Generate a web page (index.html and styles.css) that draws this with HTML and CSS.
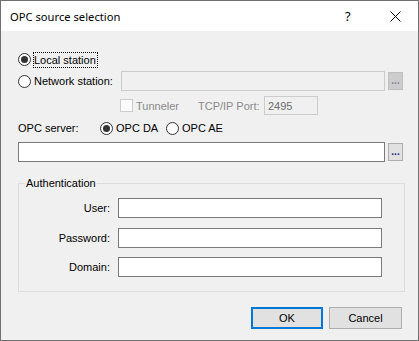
FILE: index.html
```html
<!DOCTYPE html>
<html>
<head>
<meta charset="utf-8">
<link rel="stylesheet" href="styles.css">
</head>
<body>
<div class="window">
  <div class="titlebar">
    <span class="title">OPC source selection</span>
    <span class="help">?</span>
    <span class="close"><svg width="11" height="11" viewBox="0 0 11 11"><path d="M0.5 0.5 L10.5 10.5 M10.5 0.5 L0.5 10.5" stroke="#000" stroke-width="1" fill="none"/></svg></span>
  </div>
  <div class="content">
    <div class="row row-local">
      <span class="radio checked"></span>
      <span class="focus">Local station</span>
    </div>
    <div class="row row-network">
      <span class="radio"></span>
      <span class="net-label">Network station:</span>
      <span class="input disabled net-input"></span>
      <span class="browse disabled">...</span>
    </div>
    <div class="row row-tunnel">
      <span class="check"></span>
      <span class="dim tunnel-label">Tunneler</span>
      <span class="dim port-label">TCP/IP Port:</span>
      <span class="input disabled port-input">2495</span>
    </div>
    <div class="row row-server">
      <span class="server-label">OPC server:</span>
      <span class="radio checked"></span>
      <span class="opt-label opt-da">OPC DA</span>
      <span class="radio"></span>
      <span class="opt-label">OPC AE</span>
    </div>
    <div class="row row-serverinput">
      <span class="input server-input"></span>
      <span class="browse">...</span>
    </div>
    <fieldset class="auth">
      <legend>Authentication</legend>
      <div class="field"><span class="field-label">User:</span><span class="input field-input"></span></div>
      <div class="field"><span class="field-label">Password:</span><span class="input field-input"></span></div>
      <div class="field"><span class="field-label">Domain:</span><span class="input field-input"></span></div>
    </fieldset>
    <div class="buttons">
      <button class="btn default">OK</button>
      <button class="btn">Cancel</button>
    </div>
  </div>
</div>
</body>
</html>
```
FILE: styles.css
```css
html, body {
  margin: 0;
  padding: 0;
}
body {
  font-family: "Liberation Sans", Arial, sans-serif;
  font-size: 11px;
  color: #000;
}
.window {
  width: 419px;
  height: 341px;
  box-sizing: border-box;
  border: 1px solid #707070;
  background: #f0f0f0;
  display: flex;
  flex-direction: column;
}
.titlebar {
  height: 30px;
  background: #fff;
  display: flex;
  align-items: center;
  padding-left: 9px;
  flex: none;
}
.title {
  font-family: "Noto Sans", "Open Sans", sans-serif;
  font-size: 11.2px;
  flex: 1;
}
.help {
  font-family: "Noto Sans", sans-serif;
  font-size: 13px;
  width: 8px;
  margin-right: 37px;
}
.close {
  display: flex;
  width: 11px;
  height: 11px;
  margin-right: 17px;
}
.content {
  padding: 20px 14px 0 17px;
  display: flex;
  flex-direction: column;
}
.row {
  display: flex;
  align-items: center;
}
.radio {
  width: 13px;
  height: 13px;
  box-sizing: border-box;
  border: 1px solid #333;
  border-radius: 50%;
  background: #fff;
  position: relative;
  flex: none;
}
.radio.checked::after {
  content: "";
  position: absolute;
  left: 2px;
  top: 2px;
  width: 7px;
  height: 7px;
  border-radius: 50%;
  background: #333;
}
.row-local {
  height: 17px;
}
.focus {
  margin-left: 2px;
  border: 1px dotted #000;
  padding: 0 1px 0 0;
  line-height: 14px;
}
.row-network {
  margin-top: 3px;
  height: 20px;
}
.net-label {
  margin-left: 3px;
  width: 87px;
}
.input {
  box-sizing: border-box;
  border: 1px solid #7a7a7a;
  background: #fff;
  height: 20px;
  display: flex;
  align-items: center;
}
.input.disabled {
  border-color: #cccccc;
  background: #f0f0f0;
}
.net-input {
  width: 264px;
}
.browse {
  margin-left: 3px;
  width: 15px;
  height: 18px;
  box-sizing: border-box;
  border: 1px solid #adadad;
  background: #e1e1e1;
  color: #1a1a80;
  font-size: 10px;
  font-weight: bold;
  display: flex;
  align-items: flex-end;
  justify-content: center;
  line-height: 12px;
  padding-bottom: 2px;
}
.browse.disabled {
  background: #cccccc;
  border-color: #bfbfbf;
  color: #8a8098;
}
.row-tunnel {
  margin-top: 5px;
  height: 19px;
}
.check {
  margin-left: 102px;
  width: 13px;
  height: 13px;
  box-sizing: border-box;
  border: 1px solid #cccccc;
  background: #fbfbfb;
  flex: none;
}
.dim {
  color: #8a8a8a;
}
.tunnel-label {
  margin-left: 3px;
  width: 62px;
}
.port-label {
  width: 66px;
}
.port-input {
  width: 54px;
  height: 19px;
  padding-left: 3px;
  color: #6d6d6d;
}
.row-server {
  margin-top: 5px;
  height: 16px;
}
.server-label {
  width: 82px;
}
.opt-label {
  margin-left: 3px;
}
.opt-da {
  width: 50px;
}
.row-serverinput {
  margin-top: 6px;
  height: 20px;
}
.server-input {
  width: 367px;
}
.auth {
  margin: 14px 0 0 0;
  padding: 8px 0 14px 0;
  width: 387px;
  box-sizing: border-box;
  border: 1px solid #dcdcdc;
  min-width: 0;
}
.auth legend {
  margin-left: 6px;
  padding: 0 1px;
  line-height: 14px;
}
.field {
  display: flex;
  align-items: center;
}
.field + .field {
  margin-top: 10px;
}
.field:last-child {
  margin-top: 9px;
}
.field-label {
  width: 91px;
  text-align: right;
  margin-right: 8px;
}
.field-input {
  width: 264px;
}
.buttons {
  margin-top: 15px;
  margin-right: 2px;
  display: flex;
  justify-content: flex-end;
  gap: 6px;
}
.btn {
  font-family: "Liberation Sans", Arial, sans-serif;
  font-size: 11px;
  color: #000;
  height: 22px;
  width: 73px;
  box-sizing: border-box;
  border: 1px solid #adadad;
  background: #e1e1e1;
  padding: 0;
  margin: 0;
}
.btn.default {
  width: 72px;
  border: 2px solid #0078d7;
}
```
